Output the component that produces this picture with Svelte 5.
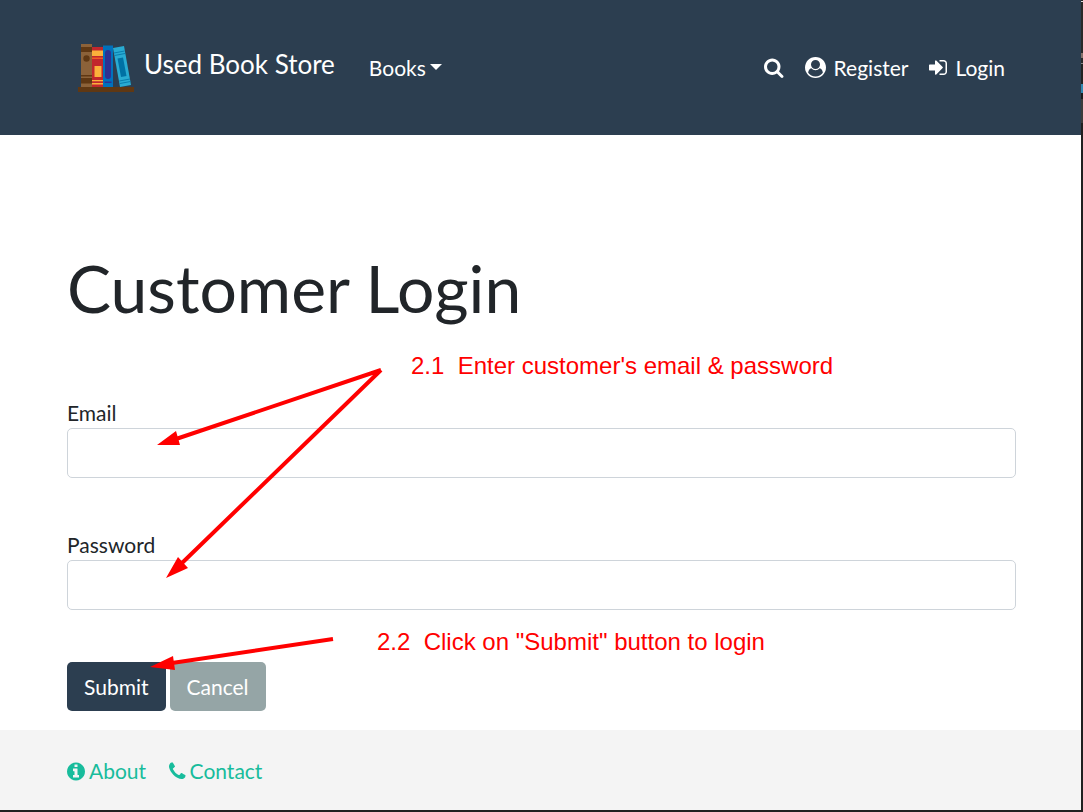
<script>
  let email = $state('');
  let password = $state('');

  const icons = {
    search: {
      box: '64 0 1664 1792',
      path: 'M1216 832q0-185-131.5-316.5t-316.5-131.5-316.5 131.5-131.5 316.5 131.5 316.5 316.5 131.5 316.5-131.5 131.5-316.5zm512 832q0 52-38 90t-90 38q-54 0-90-38l-343-342q-179 124-399 124-143 0-273.5-55.5t-225-150-150-225-55.5-273.5 55.5-273.5 150-225 225-150 273.5-55.5 273.5 55.5 225 150 150 225 55.5 273.5q0 220-124 399l343 343q37 37 37 90z'
    },
    user: {
      box: '0 0 1792 1792',
      path: 'M1523 1339q-22-155-87.5-257.5t-184.5-118.5q-67 74-159.5 115.5t-195.5 41.5-195.5-41.5-159.5-115.5q-119 16-184.5 118.5t-87.5 257.5q106 150 271 237.5t356 87.5 356-87.5 271-237.5zm-243-699q0-159-112.5-271.5t-271.5-112.5-271.5 112.5-112.5 271.5 112.5 271.5 271.5 112.5 271.5-112.5 112.5-271.5zm512 256q0 182-71 347.5t-190.5 286-285.5 191.5-349 71-349-71-285.5-191-190.5-286-71-348 71-348 191-286 286-191 348-71 348 71 286 191 191 286 71 348z'
    },
    signIn: {
      box: '128 0 1536 1792',
      path: 'M1312 896q0 26-19 45l-544 544q-19 19-45 19t-45-19-19-45v-288h-448q-26 0-45-19t-19-45v-384q0-26 19-45t45-19h448v-288q0-26 19-45t45-19 45 19l544 544q19 19 19 45zm352-352v704q0 119-84.5 203.5t-203.5 84.5h-320q-13 0-22.5-9.5t-9.5-22.5q0-4-1-20t-.5-26.5 3-23.5 10-19.5 20.5-6.5h320q66 0 113-47t47-113v-704q0-66-47-113t-113-47h-312l-11.5-1-11.5-3-8-5.5-7-9-2-13.5q0-4-1-20t-.5-26.5 3-23.5 10-19.5 20.5-6.5h320q119 0 203.5 84.5t84.5 203.5z'
    },
    info: {
      box: '128 0 1536 1792',
      path: 'M1152 1376v-160q0-14-9-23t-23-9h-96v-512q0-14-9-23t-23-9h-320q-14 0-23 9t-9 23v160q0 14 9 23t23 9h96v320h-96q-14 0-23 9t-9 23v160q0 14 9 23t23 9h448q14 0 23-9t9-23zm-128-896v-160q0-14-9-23t-23-9h-192q-14 0-23 9t-9 23v160q0 14 9 23t23 9h192q14 0 23-9t9-23zm640 416q0 209-103 385.5t-279.5 279.5-385.5 103-385.5-103-279.5-279.5-103-385.5 103-385.5 279.5-279.5 385.5-103 385.5 103 279.5 279.5 103 385.5z'
    },
    phone: {
      box: '192 0 1408 1792',
      path: 'M1600 1240q0 27-10 70.5t-21 68.5q-21 50-122 106-94 51-186 51-27 0-53-3.5t-57.5-12.5-47-14.5-55.5-20.5-49-18q-98-35-175-83-127-79-264-216t-216-264q-48-77-83-175-3-9-18-49t-20.5-55.5-14.5-47-12.5-57.5-3.5-53q0-92 51-186 56-101 106-122 25-11 68.5-21t70.5-10q14 0 21 3 18 6 53 76 11 19 30 54t35 63.5 31 53.5q3 4 17.5 25t21.5 35.5 7 28.5q0 20-28.5 50t-62 55-62 53-28.5 46q0 9 5 22.5t8.5 20.5 14 24 11.5 19q76 137 174 235t235 174q2 1 19 11.5t24 14 20.5 8.5 22.5 5q18 0 46-28.5t53-62 55-62 50-28.5q14 0 28.5 7t35.5 21.5 25 17.5q25 15 53.5 31t63.5 35 54 30q70 35 76 53 3 7 3 21z'
    }
  };
</script>

{#snippet icon(name)}
  <svg class="icon" viewBox={icons[name].box} aria-hidden="true"><path d={icons[name].path} /></svg>
{/snippet}

<div class="frame">
  <div class="page">
    <header>
      <a class="brand" href="#home">
        <svg class="logo" viewBox="0 0 56 48" aria-hidden="true">
          <rect x="3" y="0" width="11" height="43" fill="#8c6239" />
          <rect x="3" y="3" width="11" height="5" fill="#603813" />
          <circle cx="8.500" cy="14.500" r="3.200" fill="#603813" />
          <path d="M3 31h11v1.500H3zM3 34h11v5.500H3z" fill="#603813" />
          <rect x="14" y="3" width="11" height="40" fill="#c1272d" />
          <path d="M14 6.500h11v5.500H14zM16.500 22h7v11h-7zM14 36h11v1.200H14zM14 39h11v1.600H14z" fill="#fbb03b" />
          <path d="M14 13.500h11v1.500H14z" fill="#f15a24" />
          <rect x="25" y="1.500" width="10" height="41.500" fill="#0071bc" />
          <rect x="27" y="6" width="6" height="29" rx="3" fill="#2e3192" />
          <path d="M26.500 37.500h7v1.500h-7z" fill="#2e3192" />
          <path d="M35 4L46 2L53 41L42 43z" fill="#29abd2" />
          <path d="M39.500 14.500L45 13.500L48.500 32L43 33z" fill="#0071a4" />
          <path d="M36 9L46.500 7M36.500 11.500L47 9.500M41.300 37L52 35M41.800 39.500L52.500 37.500" stroke="#0071a4" stroke-width=".8" />
          <rect x="0" y="43" width="56" height="5" fill="#603813" />
        </svg>
        <span>Used Book Store</span>
      </a>
      <nav aria-label="Main">
        <button class="dropdown" type="button">Books<span class="caret"></span></button>
        <div class="account">
          <a href="#search" aria-label="Search">{@render icon('search')}</a>
          <a href="#register">{@render icon('user')}Register</a>
          <a href="#login">{@render icon('signIn')}Login</a>
        </div>
      </nav>
    </header>

    <main>
      <h1>Customer Login</h1>
      <form onsubmit={(e) => e.preventDefault()}>
        <div class="field">
          <label for="email">Email</label>
          <input id="email" type="email" bind:value={email} />
        </div>
        <div class="field">
          <label for="password">Password</label>
          <input id="password" type="password" bind:value={password} />
        </div>
        <div class="actions">
          <button class="btn primary" type="submit">Submit</button>
          <button class="btn secondary" type="button">Cancel</button>
        </div>
      </form>

      <svg class="arrows" viewBox="0 135 400 595" aria-hidden="true">
        <path d="M381 370L176 439M381 370L181 564M333 639L172 663" />
        <path class="head" d="M157 445L176 431L180 445zM166 578L178 557L188 568zM150 667L173 656L175 670z" />
      </svg>
      <p class="note credentials">2.1&nbsp; Enter customer's email &amp; password</p>
      <p class="note submit">2.2&nbsp; Click on "Submit" button to login</p>
    </main>

    <footer>
      <a href="#about">{@render icon('info')}About</a>
      <a href="#contact">{@render icon('phone')}Contact</a>
    </footer>
  </div>
</div>

<style>
  :global(body) {
    margin: 0;
  }
  .frame {
    box-sizing: border-box;
    min-height: 100vh;
    display: flex;
    padding: 0 2px 2px 0;
    background: linear-gradient(#222 0 1px, #ddd 1px 2px, #292929 2px 53px, #85706a 53px 58px, #292929 58px 63px, #888 63px 64px, #222 64px 84px, #3187b0 84px 93px, #1c1c1c 93px 99px, #3c3c3c 99px 123px, #202020 123px);
    font-family: Lato, sans-serif;
    font-size: 21px;
    line-height: 32px;
    color: #212529;
  }
  .page {
    flex: 1;
    display: flex;
    flex-direction: column;
    background: #fff;
  }
  a {
    color: inherit;
    text-decoration: none;
  }
  button,
  input {
    font: inherit;
  }
  header {
    box-sizing: border-box;
    min-height: 135px;
    display: flex;
    align-items: center;
    gap: 34px;
    padding: 0 76px 0 78px;
    background: #2c3e50;
    color: #fff;
  }
  .brand {
    display: flex;
    align-items: center;
    gap: 10px;
    padding-bottom: 4px;
    font-size: 26px;
    white-space: nowrap;
  }
  .brand span {
    padding-bottom: 4px;
  }
  .logo {
    width: 56px;
    height: 48px;
    margin-top: 4px;
  }
  nav {
    flex: 1;
    display: flex;
    align-items: center;
    justify-content: space-between;
  }
  .dropdown {
    display: flex;
    align-items: center;
    gap: 4px;
    padding: 0;
    border: 0;
    background: none;
    color: inherit;
  }
  .caret {
    margin-bottom: 2px;
    border: 6px solid transparent;
    border-top-color: #fff;
    border-bottom: 0;
  }
  .account {
    display: flex;
    gap: 21px;
  }
  .account a {
    display: flex;
    align-items: center;
    gap: 8px;
  }
  .icon {
    height: 21px;
    fill: currentColor;
  }
  main {
    position: relative;
    flex: 1;
    padding: 114px 65px 19px 67px;
  }
  h1 {
    margin: 0 0 71px;
    font-size: 66px;
    font-weight: 400;
    line-height: 78px;
  }
  form {
    display: flex;
    flex-direction: column;
  }
  .field {
    display: flex;
    flex-direction: column;
    margin-bottom: 52px;
  }
  label {
    line-height: 30px;
  }
  input {
    box-sizing: border-box;
    height: 50px;
    padding: 8px 16px;
    border: 1px solid #ced4da;
    border-radius: 5px;
    background: #fff;
    color: inherit;
  }
  .actions {
    display: flex;
    gap: 4px;
  }
  .btn {
    height: 49px;
    padding: 0 17px;
    border: 0;
    border-radius: 5px;
    color: #fff;
  }
  .primary {
    background: #2c3e50;
  }
  .secondary {
    background: #95a5a6;
  }
  .arrows {
    position: absolute;
    top: 0;
    left: 0;
    width: 400px;
    height: 595px;
    pointer-events: none;
    fill: none;
    stroke: #f00;
    stroke-width: 4;
  }
  .head {
    fill: #f00;
    stroke: none;
  }
  .note {
    position: absolute;
    margin: 0;
    font: 24px/32px "Liberation Sans", Arial, sans-serif;
    color: #f00;
    white-space: nowrap;
  }
  .credentials {
    top: 215px;
    left: 411px;
  }
  .submit {
    top: 491px;
    left: 377px;
  }
  footer {
    display: flex;
    align-items: center;
    gap: 23px;
    min-height: 80px;
    padding: 0 67px;
    background: #f4f4f4;
    color: #18bc9c;
  }
  footer a {
    display: flex;
    align-items: center;
    gap: 4px;
    padding-top: 2px;
  }
</style>
